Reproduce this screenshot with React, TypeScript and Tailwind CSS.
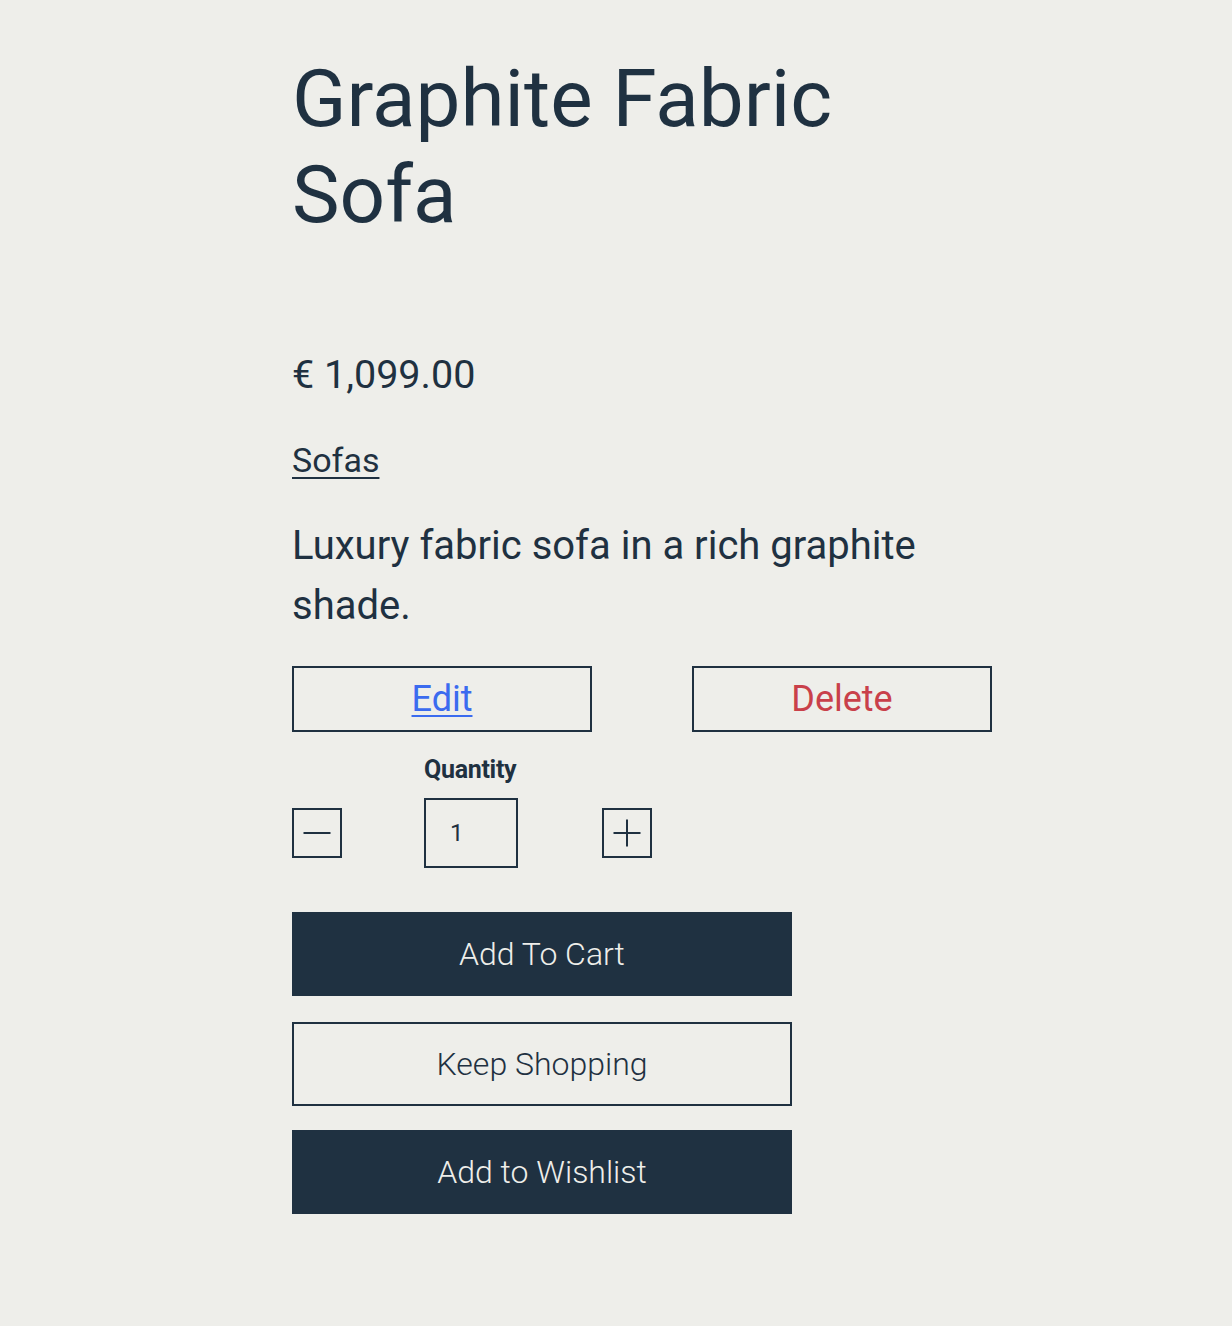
import { useState } from 'react';

const ink = 'text-[#1f3141]';

export default function App() {
  const [qty, setQty] = useState(1);

  return (
    <div className={`min-h-[1326px] bg-[#eeeeea] font-['Roboto',sans-serif] ${ink}`}>
      <div className="ml-[292px] w-[700px] pt-[51px]">
        <h1 className="text-[80px] leading-[96px] font-normal">Graphite Fabric Sofa</h1>

        <p className="mt-[109px] text-[39.5px] leading-[46px]">€ 1,099.00</p>

        <a href="#" className="mt-[42px] block w-fit text-[34px] leading-[41px] underline underline-offset-[5px] decoration-2">
          Sofas
        </a>

        <p className="mt-[35px] text-[40px] leading-[60px]">Luxury fabric sofa in a rich graphite shade.</p>

        <div className="mt-[30px] flex justify-between">
          <button className="h-[66px] w-[300px] border-2 border-[#1f3141] text-[36px] text-[#3b6bef] underline underline-offset-[4px] decoration-2">
            Edit
          </button>
          <button className="h-[66px] w-[300px] border-2 border-[#1f3141] text-[36px] text-[#c9404a]">
            Delete
          </button>
        </div>

        <div className="mt-[23px] flex items-end">
          <button
            onClick={() => setQty(Math.max(1, qty - 1))}
            className="mb-[10px] flex h-[50px] w-[50px] items-center justify-center border-2 border-[#1f3141]"
          >
            <svg width="30" height="30" viewBox="0 0 30 30">
              <line x1="1.5" y1="15" x2="28.5" y2="15" stroke="#1f3141" strokeWidth="2" />
            </svg>
          </button>
          <div className="ml-[82px] flex flex-col">
            <label className="text-[25px] leading-[30px] font-bold tracking-[-0.3px]">Quantity</label>
            <input
              value={qty}
              onChange={(e) => setQty(Number(e.target.value) || 1)}
              className="mt-[13px] h-[70px] w-[94px] border-2 border-[#1f3141] bg-transparent pl-[24px] text-[24px] outline-none"
            />
          </div>
          <button
            onClick={() => setQty(qty + 1)}
            className="mb-[10px] ml-[84px] flex h-[50px] w-[50px] items-center justify-center border-2 border-[#1f3141]"
          >
            <svg width="30" height="30" viewBox="0 0 30 30">
              <line x1="1.5" y1="15" x2="28.5" y2="15" stroke="#1f3141" strokeWidth="2" />
              <line x1="15" y1="1.5" x2="15" y2="28.5" stroke="#1f3141" strokeWidth="2" />
            </svg>
          </button>
        </div>

        <div className="mt-[44px] flex w-[500px] flex-col">
          <button className="h-[84px] bg-[#1f3141] text-[32px] font-light text-[#eeeeea]">Add To Cart</button>
          <button className="mt-[26px] h-[84px] border-2 border-[#1f3141] text-[32px] font-light">Keep Shopping</button>
          <button className="mt-[24px] h-[84px] bg-[#1f3141] text-[32px] font-light text-[#eeeeea]">Add to Wishlist</button>
        </div>
      </div>
    </div>
  );
}
